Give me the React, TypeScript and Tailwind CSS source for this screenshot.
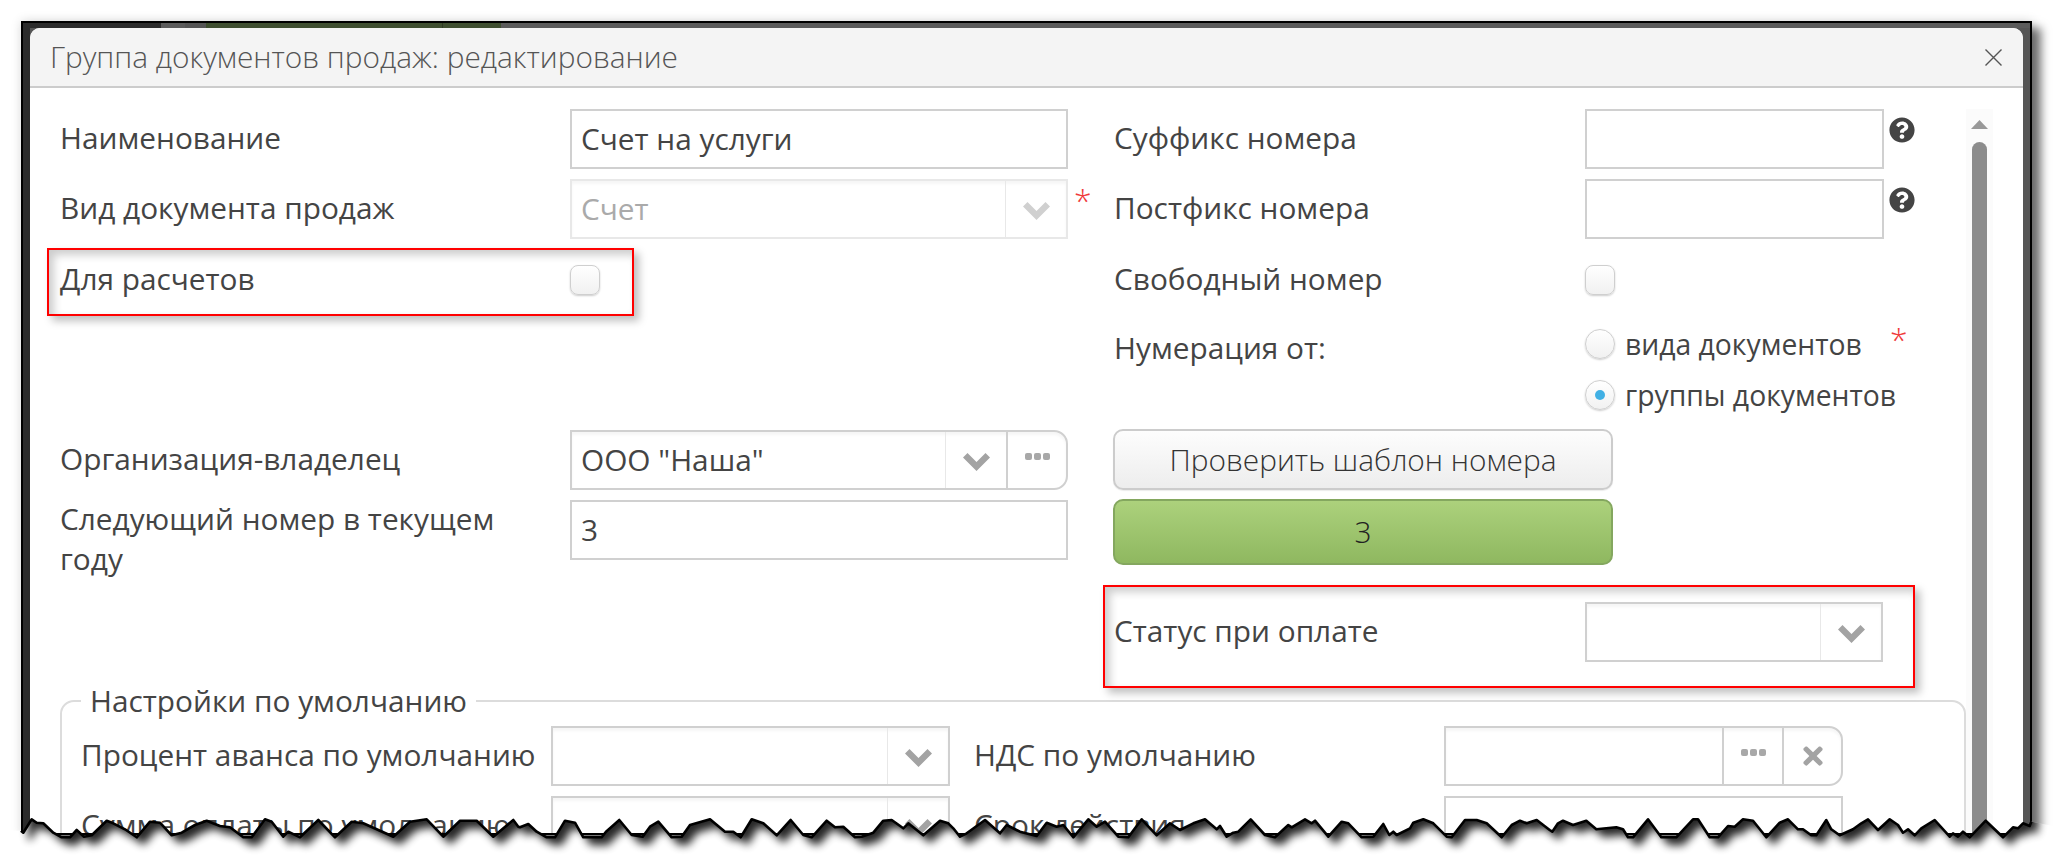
import React from "react";
import { FaQuestionCircle, FaTimes } from "react-icons/fa";

// --- TORN EDGE ---
// points read off the screenshot: [x, y] on the page
const toPts = (ox: number, raw: number[][]) => raw.map(([x, y]) => [ox + x / 3, 790 + y / 3]);

const tornLine = [
  ...toPts(10, [[33,122],[40,128],[65,88],[80,98],[100,100],[130,128],[155,142],[180,142],[200,120],[222,140],[245,136],[290,92],[310,100],[345,118],[380,142],[420,95],[450,98],[485,136],[515,128],[555,105],[590,92],[630,108],[660,112],[700,142],[725,142],[765,88],[785,95],[820,140],[835,125],[870,142],[925,90],[975,142],[1025,95],[1060,100],[1100,118],[1150,140],[1200,95],[1250,88],[1300,140],[1350,92],[1400,92],[1450,140],[1510,90],[1525,110]]),
  ...toPts(520, [[0,112],[25,102],[50,125],[80,142],[105,142],[135,92],[165,98],[190,142],[245,142],[258,125],[298,90],[335,135],[368,140],[390,110],[415,95],[455,142],[485,140],[510,105],[570,88],[615,125],[640,125],[662,142],[695,88],[730,100],[770,136],[812,90],[850,135],[875,142],[920,92],[945,112],[970,110],[1005,142],[1025,140],[1060,128],[1090,92],[1115,90],[1150,115],[1165,100],[1210,136],[1260,92],[1285,100],[1300,115],[1320,140],[1340,130],[1395,90],[1440,130],[1460,105],[1500,125]]),
  ...toPts(1030, [[20,138],[50,98],[80,110],[100,105],[130,142],[175,88],[200,110],[225,95],[265,140],[295,142],[335,88],[380,136],[420,100],[450,120],[490,100],[525,88],[560,118],[570,108],[590,140],[610,128],[625,125],[662,88],[705,135],[735,142],[775,105],[785,112],[825,88],[845,100],[855,92],[895,140],[935,95],[955,100],[995,142],[1030,140],[1060,102],[1078,135],[1090,125],[1100,135],[1140,115],[1150,98],[1180,88],[1210,100],[1250,140],[1265,142],[1305,90],[1340,90],[1370,100],[1415,142],[1445,105],[1470,92],[1490,100],[1520,90]]),
  ...toPts(1533, [[50,120],[58,125],[75,100],[90,92],[120,105],[160,92],[190,118],[250,112],[270,118],[285,142],[300,142],[345,88],[385,142],[430,142],[480,88],[495,88],[530,142],[555,142],[585,108],[605,110],[630,88],[660,92],[700,142],[740,98],[765,88],[795,118],[810,118],[835,136],[850,136],[880,90],[895,118],[920,136],[960,118],[985,100],[1005,88],[1035,120],[1070,88],[1095,105],[1110,128],[1125,118],[1145,136],[1165,115],[1205,90],[1250,140],[1260,130],[1275,140],[1290,125],[1310,142],[1358,92],[1410,142],[1440,112],[1455,115],[1470,100],[1490,108],[1495,95]]),
];

const linePts = tornLine.map(([x, y]) => `${x.toFixed(1)},${y.toFixed(1)}`).join(" ");

const TornEdge = () => (
  <svg className="absolute top-0 left-0" width="2053" height="866" viewBox="0 0 2053 866">
    <defs>
      <filter id="tornBlur" x="-5%" y="-50%" width="110%" height="200%">
        <feGaussianBlur stdDeviation="4.5" />
      </filter>
      <clipPath id="belowTear">
        <polygon points={`0,866 0,830 ${linePts} 2053,826 2053,866`} />
      </clipPath>
    </defs>
    <polygon points={`0,866 0,830 ${linePts} 2053,826 2053,866`} fill="#ffffff" />
    <g clipPath="url(#belowTear)">
      <polygon
        points={`21,760 ${linePts} 2032,760`}
        transform="translate(7,8)"
        fill="#000000"
        opacity="0.85"
        filter="url(#tornBlur)"
      />
    </g>
    <polyline points={linePts} fill="none" stroke="#000000" strokeWidth="2.6" strokeLinejoin="round" />
  </svg>
);

// --- SMALL PARTS ---
const Chevron = ({ light }: { light?: boolean }) => (
  <svg width="27" height="18" viewBox="0 0 27 18" className="mt-[4px]">
    <path
      d="M0 4.5 L4.5 0 L13.5 9 L22.5 0 L27 4.5 L13.5 18 Z"
      fill={light ? "#d0d0d0" : "#a3a3a3"}
    />
  </svg>
);

const Dots = () => (
  <div className="flex gap-[2px] -mt-[8px]">
    <span className="w-[7px] h-[7px] rounded-[2px] bg-[#a8a8a8]" />
    <span className="w-[7px] h-[7px] rounded-[2px] bg-[#a8a8a8]" />
    <span className="w-[7px] h-[7px] rounded-[2px] bg-[#a8a8a8]" />
  </div>
);

const Input = ({ value, className }: { value?: string; className: string }) => (
  <div className={`h-[60px] border-2 border-[#d0d0d0] bg-white pl-[9px] flex items-center text-[#444] ${className}`}>
    {value}
  </div>
);

const Select = ({ value, className, disabled, dots, clear }: {
  value?: string; className: string; disabled?: boolean; dots?: boolean; clear?: boolean;
}) => (
  <div
    className={`h-[60px] border-2 flex items-stretch bg-white shadow-[inset_0_3px_3px_#f6f6f6] ${
      disabled ? "border-[#e8e8e8] text-[#aaa]" : "border-[#d0d0d0] text-[#444]"
    } ${dots ? "rounded-r-[14px]" : ""} ${className}`}
  >
    <div className="flex-1 pl-[9px] flex items-center whitespace-nowrap">{value}</div>
    {!clear && (
      <div className="w-[61px] flex items-center justify-center border-l border-[#e8e8e8]">
        <Chevron light={disabled} />
      </div>
    )}
    {dots && (
      <div className="w-[60px] flex items-center justify-center border-l-2 border-[#d0d0d0]">
        <Dots />
      </div>
    )}
    {clear && (
      <div className="w-[59px] flex items-center justify-center border-l-2 border-[#d0d0d0]">
        <FaTimes size={28} className="text-[#a3a3a3]" />
      </div>
    )}
  </div>
);

const Checkbox = () => (
  <div className="w-[30px] h-[30px] rounded-[8px] border border-[#cfcfcf] bg-gradient-to-b from-white to-[#f1f1f1] shadow-[0_1px_2px_rgba(0,0,0,0.2)]" />
);

const Radio = ({ on }: { on?: boolean }) => (
  <div className="w-[30px] h-[30px] rounded-full border border-[#cfcfcf] bg-gradient-to-b from-white to-[#f1f1f1] shadow-[0_1px_2px_rgba(0,0,0,0.2)] flex items-center justify-center">
    {on && <span className="w-[10px] h-[10px] rounded-full bg-[#41b0e4]" />}
  </div>
);

const Star = ({ className }: { className: string }) => (
  <span className={`absolute text-[#f03a3a] text-[32px] leading-none font-light ${className}`}>*</span>
);

const Help = () => <FaQuestionCircle size={26} className="text-[#444] ml-[5px] mt-[8px] shrink-0" />;

const RedBox = ({ className }: { className: string }) => (
  <div
    className={`absolute border-2 border-[#ff0000] shadow-[5px_5px_8px_rgba(0,0,0,0.25),inset_5px_5px_9px_rgba(0,0,0,0.2)] ${className}`}
  />
);

const App = () => {
  return (
    <div className="relative h-[866px] w-[2053px] overflow-hidden bg-white text-[29.8px] leading-[40px] text-[#444] font-['Open_Sans',sans-serif]">
      <div className="pt-[21px] pl-[21px]">
        {/* dimmed window frame */}
        <div className="w-[2011px] h-[814px] border-2 border-black bg-[#555] shadow-[9px_7px_9px_rgba(0,0,0,0.55),0_0_10px_rgba(0,0,0,0.15)] overflow-hidden">
          <div className="flex h-[5px]">
            <div className="w-[138px] bg-[#2b2b2b]" />
            <div className="w-[24px] bg-[#5b5b5b]" />
            <div className="w-[21px] bg-[#555]" />
            <div className="w-[236px] bg-[#3f4f30]" />
            <div className="w-[59px] bg-[#3f4f30] border-l border-[#2f3a24]" />
            <div className="flex-1 bg-[#5b5b5b]" />
          </div>

          <div className="flex h-full">
            <div className="w-[7px] bg-[#2b2b2b]" />
            {/* dialog */}
            <div className="w-[1993px] bg-white rounded-t-[10px] overflow-hidden">
              <div className="h-[60px] bg-[#f4f4f4] border-b-2 border-[#cccccc] flex items-center justify-between pl-[20px] pr-[21px] text-[#555] font-light">
                <span>Группа документов продаж: редактирование</span>
                <svg width="17" height="17" viewBox="0 0 17 17" stroke="#555" strokeWidth="1.4" fill="none">
                  <path d="M0.5 0.5 L16.5 16.5 M16.5 0.5 L0.5 16.5" />
                </svg>
              </div>

              <div className="flex">
                <div className="w-[1936px] pl-[30px] pt-[21px]">
                  <div className="flex gap-[45px] h-[572px]">
                    {/* left column */}
                    <div className="w-[1008px] shrink-0">
                      <div className="flex items-center mb-[10px]">
                        <div className="w-[510px] -mt-[2px]">Наименование</div>
                        <Input value="Счет на услуги" className="w-[498px]" />
                      </div>
                      <div className="relative flex items-center mb-[10px]">
                        <div className="w-[510px] -mt-[2px]">Вид документа продаж</div>
                        <Select value="Счет" disabled className="w-[498px]" />
                        <Star className="left-[1014px] top-[5px]" />
                      </div>
                      <div className="relative flex items-center h-[62px] mb-[119px]">
                        <div className="w-[510px] -mt-[2px]">Для расчетов</div>
                        <Checkbox />
                        <RedBox className="-left-[13px] -top-[1px] w-[587px] h-[68px]" />
                      </div>
                      <div className="flex items-center mb-[10px]">
                        <div className="w-[510px] -mt-[2px]">Организация-владелец</div>
                        <Select value={'ООО "Наша"'} dots className="w-[498px]" />
                      </div>
                      <div className="flex items-start">
                        <div className="w-[510px] pr-[30px] -mt-[1px]">Следующий номер в текущем году</div>
                        <Input value="3" className="w-[498px]" />
                      </div>
                    </div>

                    {/* right column */}
                    <div className="flex-1">
                      <div className="flex items-start mb-[10px]">
                        <div className="w-[472px] pl-[1px] h-[58px] flex items-center">Суффикс номера</div>
                        <Input className="w-[299px]" />
                        <Help />
                      </div>
                      <div className="flex items-start mb-[10px]">
                        <div className="w-[472px] pl-[1px] h-[58px] flex items-center">Постфикс номера</div>
                        <Input className="w-[299px]" />
                        <Help />
                      </div>
                      <div className="flex items-center h-[62px] mb-[7px]">
                        <div className="w-[472px] pl-[1px] -mt-[2px]">Свободный номер</div>
                        <Checkbox />
                      </div>
                      <div className="relative flex items-start">
                        <div className="w-[472px] pl-[1px] pt-[10px]">Нумерация от:</div>
                        <div>
                          <div className="flex items-center gap-[10px] h-[51px] text-[28.3px]">
                            <Radio />
                            <span>вида документов</span>
                          </div>
                          <div className="flex items-center gap-[10px] h-[51px] text-[28.3px]">
                            <Radio on />
                            <span>группы документов</span>
                          </div>
                        </div>
                        <Star className="left-[777px] top-[5px]" />
                      </div>
                      <button className="block mt-[9px] w-[500px] h-[61px] rounded-[10px] border-2 border-[#cccccc] bg-gradient-to-b from-[#fdfdfd] to-[#ededed] font-light text-[#333] shadow-[0_1px_1px_rgba(0,0,0,0.08)]">
                        Проверить шаблон номера
                      </button>
                      <div className="mt-[9px] w-[500px] h-[66px] rounded-[10px] border-2 border-[#84a75f] bg-gradient-to-b from-[#acd17c] to-[#8fb860] flex items-center justify-center font-light text-[#222]">
                        3
                      </div>
                      <div className="relative flex items-center mt-[37px]">
                        <div className="w-[472px] pl-[1px] -mt-[2px]">Статус при оплате</div>
                        <Select className="w-[298px]" />
                        <RedBox className="-left-[10px] -top-[17px] w-[812px] h-[103px]" />
                      </div>
                    </div>
                  </div>

                  {/* defaults */}
                  <fieldset className="w-[1906px] border-2 border-[#dcdcdc] rounded-[14px] pl-[19px] pt-[5px]">
                    <legend className="px-[9px] leading-[40px]">Настройки по умолчанию</legend>
                    <div className="flex items-center mb-[10px]">
                      <div className="w-[470px] whitespace-nowrap -mt-[2px]">Процент аванса по умолчанию</div>
                      <Select className="w-[399px]" />
                      <div className="w-[494px] pl-[24px] -mt-[2px]">НДС по умолчанию</div>
                      <Select clear dots className="w-[399px]" />
                    </div>
                    <div className="flex items-center">
                      <div className="w-[470px] whitespace-nowrap -mt-[2px]">Сумма оплаты по умолчанию</div>
                      <Select className="w-[399px]" />
                      <div className="w-[494px] pl-[24px] -mt-[2px]">Срок действия</div>
                      <Input className="w-[399px]" />
                    </div>
                  </fieldset>
                </div>

                {/* scrollbar */}
                <div className="w-[27px] mt-[21px] bg-[#fbfbfb] flex flex-col items-center">
                  <svg width="17" height="9" viewBox="0 0 17 9" className="mt-[11px]">
                    <polygon points="8.5,0 17,9 0,9" fill="#999" />
                  </svg>
                  <div className="mt-[13px] w-[15px] h-[800px] rounded-t-[8px] bg-[#8c8c8c]" />
                </div>
                <div className="flex-1" />
              </div>
            </div>
          </div>
        </div>
      </div>

      <TornEdge />
    </div>
  );
};

export default App;
